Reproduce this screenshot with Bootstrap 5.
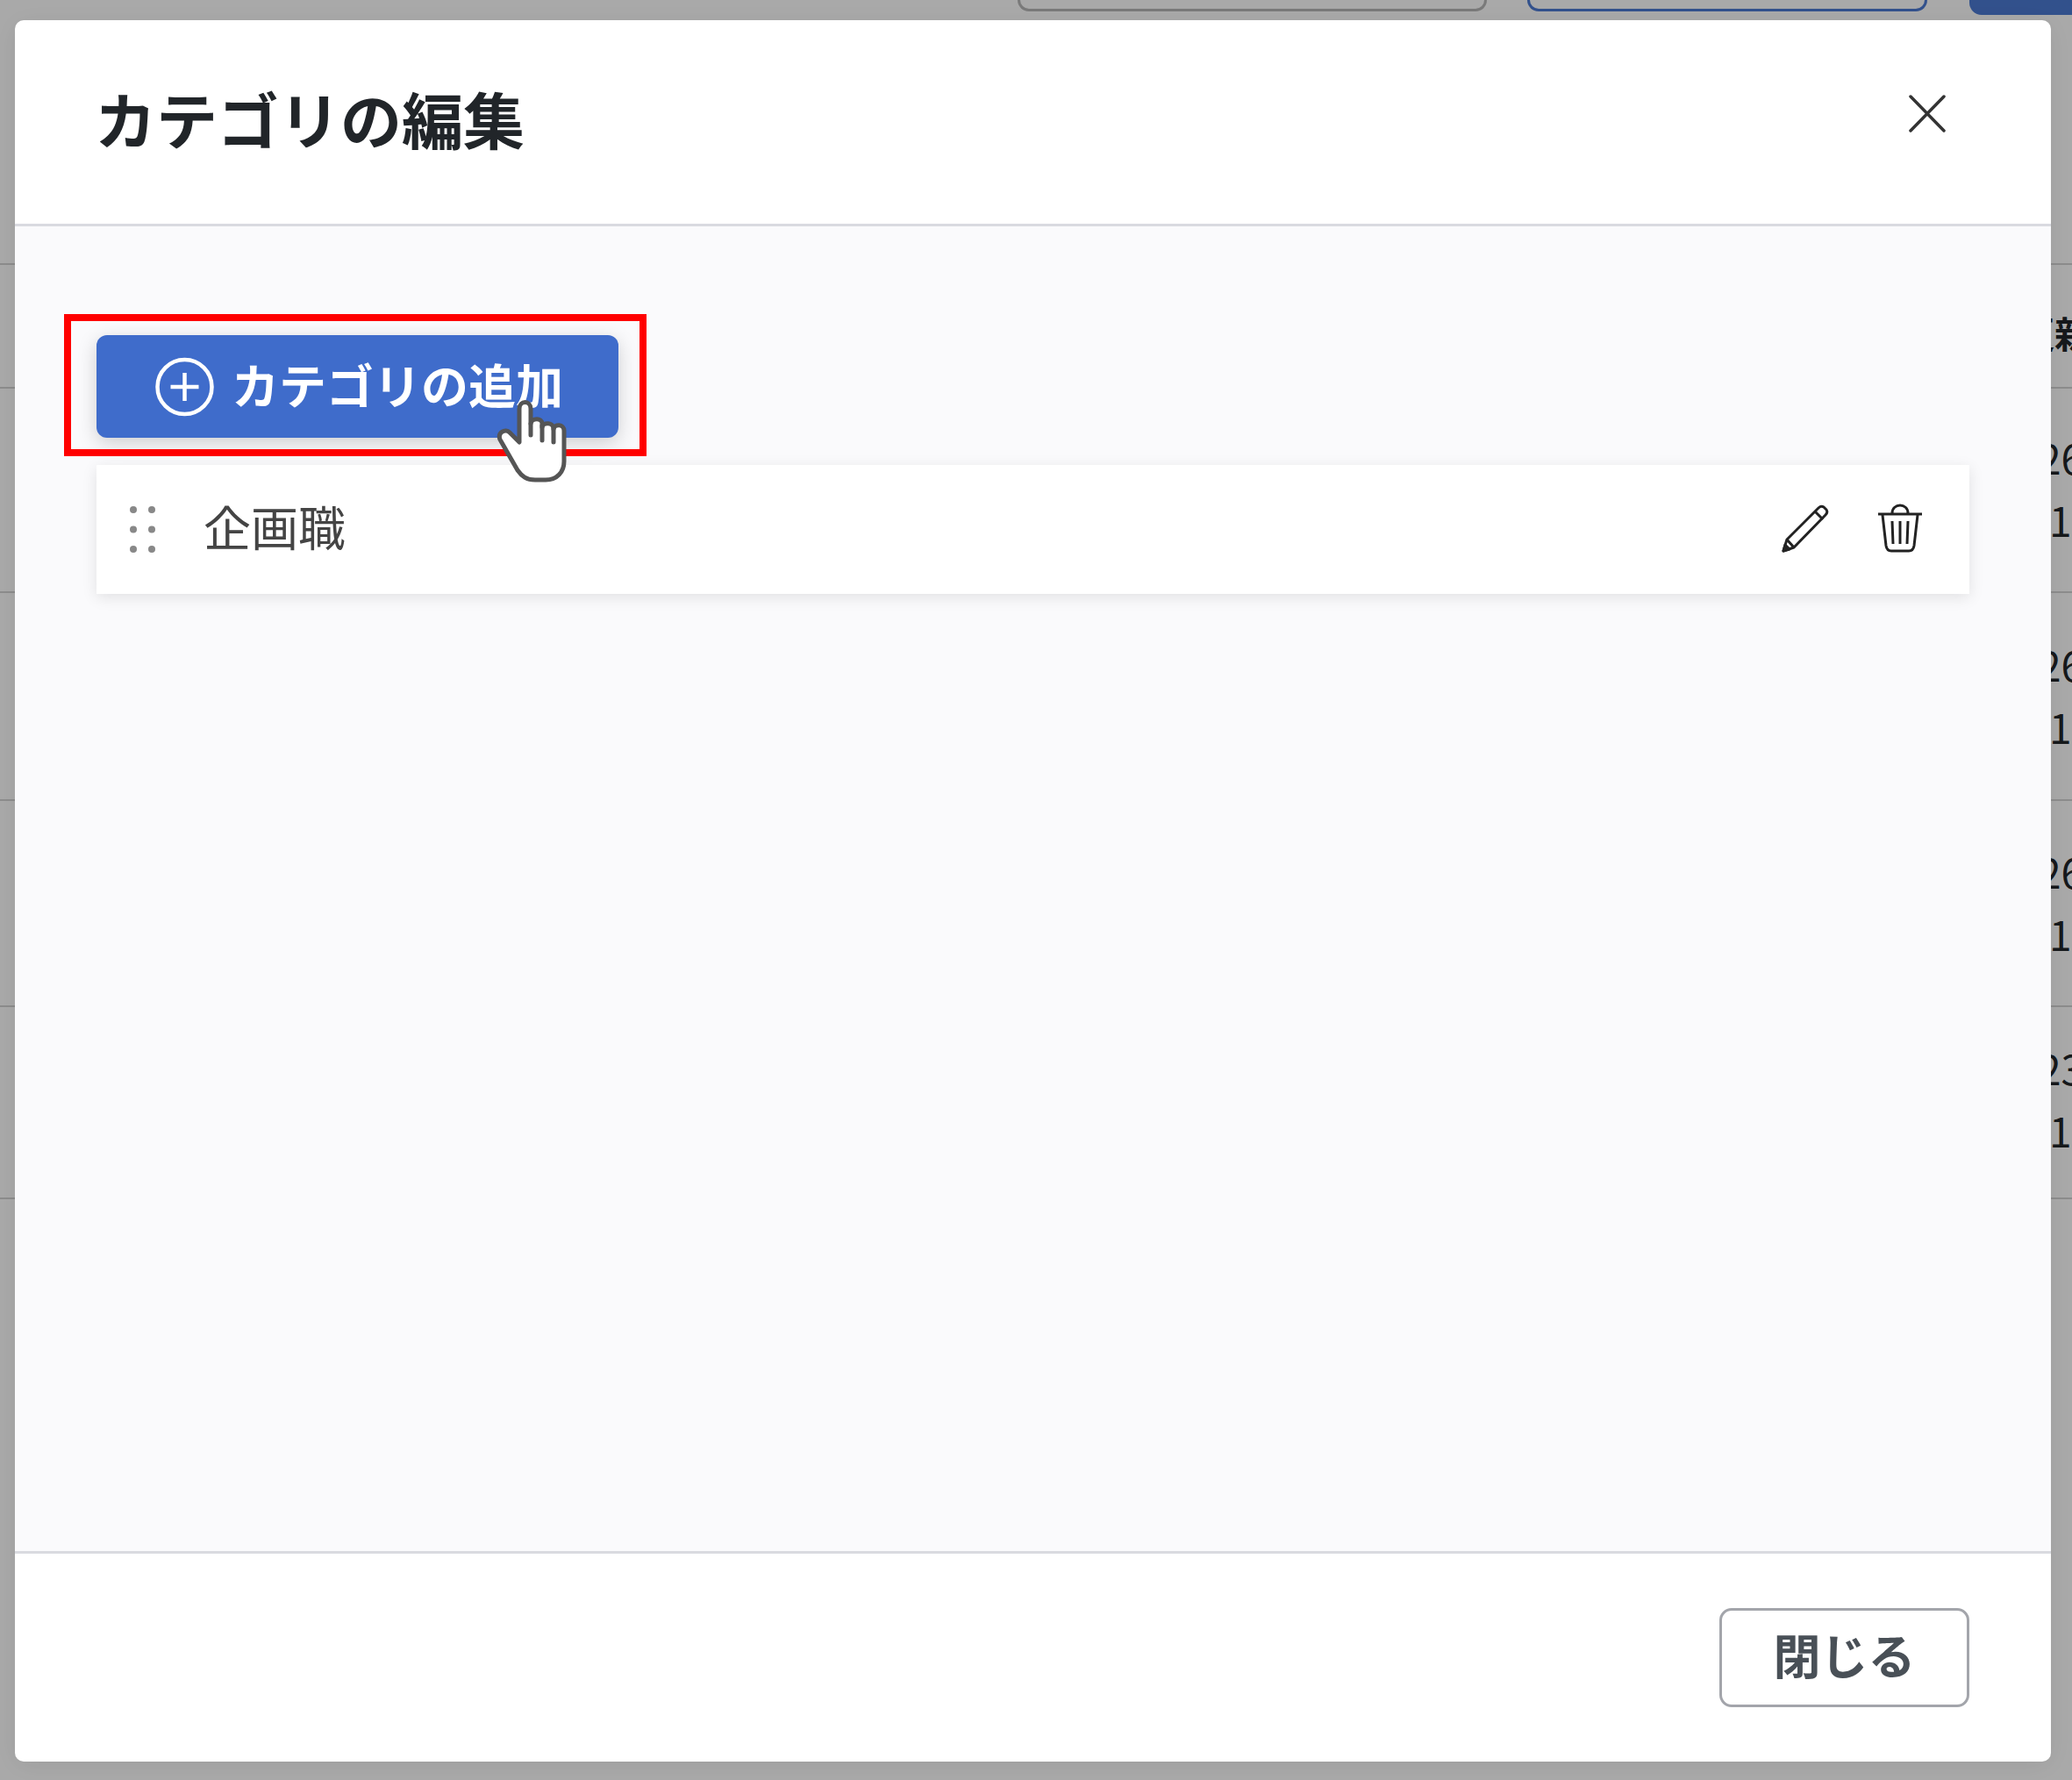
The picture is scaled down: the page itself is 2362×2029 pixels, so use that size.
<!DOCTYPE html>
<html lang="ja">
<head>
    <meta charset="UTF-8">
    <title>カテゴリの編集</title>
    <link href="https://cdn.jsdelivr.net/npm/bootstrap@5.3.2/dist/css/bootstrap.min.css" rel="stylesheet">
    <style>
        body { margin: 0; height: 2029px; overflow: hidden; background: #fff; color: #212529;
            font-family: "Noto Sans CJK JP", "Noto Sans", sans-serif; }

        /* page behind the backdrop */
        .page-top { height: 302px; border-bottom: 2px solid #d4d4d4; }
        .top-btn { height: 13px; border: 3px solid #b8b8b8; border-top: 0; border-radius: 0 0 14px 14px; flex: none; }
        .top-btn-a { width: 535px; margin-left: 1160px; }
        .top-btn-b { width: 456px; margin-left: 46px; border-color: #4c7ad4; }
        .top-btn-c { width: 140px; height: 17px; margin-left: 48px; background: #4c7ad4; border-color: #4c7ad4; }
        .page-row { border-bottom: 2px solid #d4d4d4; padding-left: 2324px; white-space: nowrap;
            font-size: 46px; line-height: 71px; }
        .page-row > div:last-child { margin-left: 12px; }
        .row-head { height: 141px; padding-top: 41px; padding-left: 2300px; font-size: 42px; font-weight: 700; }
        .row-a { height: 233px; padding-top: 43px; }
        .row-b { height: 237px; padding-top: 46px; }
        .row-c { height: 235px; padding-top: 45px; }
        .row-d { height: 219px; padding-top: 34px; }

        /* modal */
        .modal-backdrop.show { opacity: .337; }
        .edit-dialog { max-width: none; width: 2321px; height: 1985px; margin: 23px 0 0 17px; }
        .edit-content { height: 100%; border: 0; border-radius: 10px; box-shadow: 0 4px 30px rgba(0, 0, 0, .08); }
        .edit-header { height: 235px; padding: 0 120px 0 91px; border-bottom: 3px solid #d9dae0; border-radius: 10px 10px 0 0; }
        .edit-title { font-size: 70px; font-weight: 700; line-height: 1.2; margin-top: -8px; color: #212529; }
        .x-btn { width: 42px; height: 43px; margin-top: -20px; border: 0; padding: 0; background: none; }
        .edit-body { position: relative; padding: 124px 93px 0; background: #fafafc; }
        .add-btn { width: 595px; height: 117px; padding: 0 0 0 67px; gap: 20px; font-size: 54px; font-weight: 700;
            line-height: 1; background: #3f6ccb; border: 0; border-radius: 12px; color: #fff;
            box-shadow: 0 6px 22px rgba(0, 0, 0, .18); }
        .add-btn:hover, .add-btn:active { background: #3f6ccb; color: #fff; }
        .add-label { margin-top: -5px; }
        .cat-item { height: 147px; margin-top: 31px; padding: 0 53px 0 38px; background: #fff;
            box-shadow: 0 4px 16px rgba(0, 0, 0, .1); }
        .cat-name { margin-left: 55px; margin-top: -7px; font-size: 54px; line-height: 1; color: #444; }
        .icon-gap { gap: 55px; margin-top: -3px; }
        .red-box { position: absolute; left: 56px; top: 100px; width: 664px; height: 162px; border: 8px solid #f00; pointer-events: none; }
        .hand { position: absolute; left: 543px; top: 193px; }
        .edit-footer { height: 240px; padding: 0 93px 0 0; border-top: 3px solid #d9dae0; align-items: flex-start; border-radius: 0 0 10px 10px; }
        .close-btn { width: 285px; height: 113px; margin: 62px 0 0; padding: 0 0 8px; border: 3px solid #a3a5ab; border-radius: 14px;
            background: #fff; color: #495057; font-size: 54px; font-weight: 700; line-height: 1; }
    </style>
</head>
<body>
<div class="page-top d-flex align-items-start">
    <div class="top-btn top-btn-a"></div>
    <div class="top-btn top-btn-b"></div>
    <div class="top-btn top-btn-c"></div>
</div>
<div class="page-row row-head">更新</div>
<div class="page-row row-a"><div>26</div><div>1</div></div>
<div class="page-row row-b"><div>26</div><div>1</div></div>
<div class="page-row row-c"><div>26</div><div>1</div></div>
<div class="page-row row-d"><div>23</div><div>1</div></div>

<div class="modal-backdrop show"></div>
<div class="modal d-block" tabindex="-1">
    <div class="modal-dialog edit-dialog">
        <div class="modal-content edit-content">
            <div class="modal-header edit-header d-flex justify-content-between">
                <h5 class="modal-title edit-title">カテゴリの編集</h5>
                <button type="button" class="x-btn" aria-label="閉じる">
                    <svg width="42" height="43" viewBox="0 0 42 43" fill="none" stroke="#333" stroke-width="3.5" stroke-linecap="round"><path d="M2 2 40 41M40 2 2 41"/></svg>
                </button>
            </div>
            <div class="modal-body edit-body">
                <button type="button" class="btn add-btn d-flex align-items-center">
                    <svg width="67" height="68" viewBox="0 0 67 68" fill="none" stroke="#fff" stroke-width="4.5"><circle cx="33.5" cy="34" r="31"/><path d="M33.5 18V50M17.5 34H49.5"/></svg>
                    <span class="add-label">カテゴリの追加</span>
                </button>
                <div class="cat-item d-flex align-items-center">
                    <svg width="29" height="53" viewBox="0 0 29 53" fill="#888"><circle cx="4" cy="4" r="4"/><circle cx="25" cy="4" r="4"/><circle cx="4" cy="26.5" r="4"/><circle cx="25" cy="26.5" r="4"/><circle cx="4" cy="49" r="4"/><circle cx="25" cy="49" r="4"/></svg>
                    <span class="cat-name">企画職</span>
                    <div class="d-flex align-items-center icon-gap ms-auto">
                        <svg width="54" height="56" viewBox="0 0 54 56" fill="none" stroke="#222" stroke-width="3" stroke-linejoin="round"><path d="M2 54 6 41 42 5Q45 2 48 4L51 7Q53 10 50 13L14 50Z"/><path d="M38 9 47 18M6 41 14 50"/><path d="M2 54 4 47 9 52Z" fill="#222"/></svg>
                        <svg width="52" height="56" viewBox="0 0 52 56" fill="none" stroke="#222" stroke-width="3"><path d="M1 12H51M17 11C17-1 35-1 35 11M6 13 10 48Q11 54 16 54H36Q41 54 42 48L46 13M17 20 18 46M26 20V46M35 20 34 46"/></svg>
                    </div>
                </div>
                <div class="red-box"></div>
                <svg class="hand" width="110" height="130" viewBox="20 30 110 130" fill="#fff" stroke="#555" stroke-width="5" stroke-linejoin="round" stroke-linecap="round"><path d="M52 83V45C52 35 65 35 65 45V62C66 55 78 55 78 62V66C79 60 91 60 91 68C92 62 103 62 103 70V105C103 117 95 126 82 126H70C60 126 55 122 50 115L30 80C27 72 36 67 41 72Z"/><path d="M65 62V75M78 64V81M91 68V83" fill="none"/></svg>
            </div>
            <div class="modal-footer edit-footer">
                <button type="button" class="btn close-btn" data-bs-dismiss="modal">閉じる</button>
            </div>
        </div>
    </div>
</div>
<script src="https://cdn.jsdelivr.net/npm/bootstrap@5.3.2/dist/js/bootstrap.bundle.min.js"></script>
</body>
</html>
